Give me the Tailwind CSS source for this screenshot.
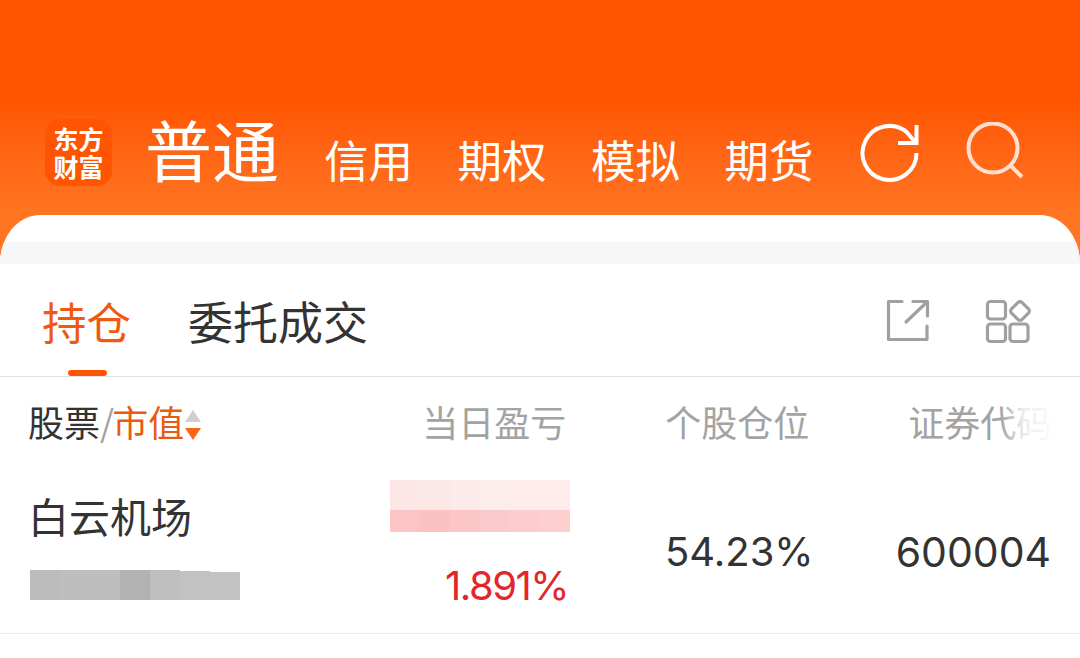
<!DOCTYPE html>
<html><head><meta charset="utf-8">
<script src="https://cdn.jsdelivr.net/npm/@tailwindcss/browser@4"></script>
</head>
<body class="m-0 bg-white overflow-hidden font-['Noto_Sans_CJK_SC','Noto_Sans',sans-serif]">
<div class="w-[1080px] h-[658px] relative overflow-hidden bg-white">
  <header class="h-[270px] bg-gradient-to-b from-[#ff5500] from-[36%] to-[#ff7522] to-[80%] flex items-start pt-[119px] pl-[45px]">
    <div class="w-[67px] h-[67px] rounded-[15px] bg-[#ff5500] flex flex-col items-center pt-[5px] text-white text-[25px] leading-[28px] font-bold">
      <span>东方</span><span>财富</span>
    </div>
    <span class="ml-[33px] text-white text-[67px] leading-[66px] -mt-[4px]">普通</span>
    <nav class="flex ml-[45px] gap-[44.5px] text-white text-[44.5px] leading-[50px] pt-[15px]">
      <span>信用</span><span>期权</span><span>模拟</span><span>期货</span>
    </nav>
    <svg class="ml-[45px] mt-[3px]" width="60" height="60" viewBox="0 0 60 60" fill="none" stroke="#fff" stroke-width="4">
      <path d="M57.5 31A27 27 0 1 1 47.9 10.3L57 21"/>
      <path d="M57.5 3V21H39"/>
    </svg>
    <svg class="ml-[47px] mt-[3px] opacity-80" width="60" height="60" viewBox="0 0 60 60" fill="none" stroke="#fff" stroke-width="4">
      <circle cx="27" cy="26" r="24.5"/>
      <path d="M44 43L56 55"/>
    </svg>
  </header>
  <main class="absolute left-0 right-0 top-[215px] bottom-0 rounded-tl-[40px_48px] rounded-tr-[40px_48px] bg-white overflow-hidden">
    <div class="h-[27px]"></div>
    <div class="h-[22px] bg-[#f6f7f9]"></div>
    <section class="h-[113px] border-b border-[#e3e3e3] flex items-start relative">
      <span class="ml-[42px] mt-[29px] text-[44.5px] leading-[56px] text-[#f05a10]">持仓</span>
      <span class="ml-[57px] mt-[29px] text-[45px] leading-[56px] text-[#333]">委托成交</span>
      <span class="absolute left-[68px] bottom-0 w-[39px] h-[6px] rounded-full bg-[#ff5500]"></span>
      <svg class="ml-auto mt-[34px]" width="46" height="46" viewBox="0 0 46 46" fill="none" stroke="#a0a0a0" stroke-width="3.2" stroke-linecap="round" stroke-linejoin="round">
        <path d="M17 3.5H3.5V41.5H42V28"/><path d="M21 24L42 4"/><path d="M28 3.5H42.5V18"/>
      </svg>
      <svg class="ml-[54px] mr-[49px] mt-[34px]" width="46" height="46" viewBox="0 0 46 46" fill="none" stroke="#a0a0a0" stroke-width="3.2" stroke-linejoin="round">
        <rect x="2.5" y="3.5" width="18" height="17.5" rx="3"/>
        <rect x="2.5" y="26" width="18" height="17.5" rx="3"/>
        <rect x="25" y="26" width="18" height="17.5" rx="3"/>
        <rect x="27.5" y="5.5" width="15" height="15" rx="3" transform="rotate(45 35 13)"/>
      </svg>
    </section>
    <section class="h-[95px] flex items-start text-[36px] leading-[48px] text-[#a3a3a3] relative pt-[20px]">
      <span class="ml-[28px] text-[#333]">股票</span><span>/</span><span class="-ml-[2px] text-[#e85c12]">市值</span>
      <svg class="mt-[12px]" width="18" height="32" viewBox="0 0 18 32"><path d="M9 1L17 13H1Z" fill="#cfcfcf"/><path d="M1 19H17L9 31Z" fill="#fb6514"/></svg>
      <span class="ml-[220px]">当日盈亏</span>
      <span class="ml-[99px]">个股仓位</span>
      <span class="ml-[99px] whitespace-nowrap">证券代码</span>
      <div class="absolute right-0 top-0 bottom-0 w-[80px] bg-gradient-to-r from-white/0 via-white/80 via-[30%] to-white/95 to-[65%]"></div>
    </section>
    <section class="h-[162px] border-b border-[#ededed] flex items-start relative">
      <div class="w-[390px] pl-[28px] pt-[19px] shrink-0">
        <div class="text-[41px] leading-[48px] text-[#333]">白云机场</div>
        <div class="flex mt-[31px] ml-[2px] h-[30px] w-[210px]">
          <div class="w-[30px] bg-[#bcbcbc]"></div><div class="w-[60px] bg-[#bebebe]"></div><div class="w-[30px] bg-[#b2b2b2]"></div><div class="w-[30px] bg-[#bfbfbf]"></div><div class="w-[30px] h-[29px] self-end bg-[#c2c2c2]"></div><div class="w-[30px] h-[28px] self-end bg-[#c2c2c2]"></div>
        </div>
      </div>
      <div class="w-[180px] shrink-0 pt-[8px] flex flex-col items-end">
        <div class="flex w-full h-[30px]">
          <div class="flex-1 bg-[#fce6e6]"></div><div class="flex-1 bg-[#fde8e8]"></div><div class="flex-1 bg-[#fdeaea]"></div><div class="flex-1 bg-[#fdecec]"></div><div class="flex-1 bg-[#feecec]"></div><div class="flex-1 bg-[#feecec]"></div>
        </div>
        <div class="flex w-full h-[22px]">
          <div class="flex-1 bg-[#fcc4c4]"></div><div class="flex-1 bg-[#fcc2c2]"></div><div class="flex-1 bg-[#fcc6c6]"></div><div class="flex-1 bg-[#fccaca]"></div><div class="flex-1 bg-[#fdcccc]"></div><div class="flex-1 bg-[#fdcfcf]"></div>
        </div>
        <div class="mt-[30px] pr-[2px] text-[40px] leading-[48px] tracking-[-1.5px] text-[#e3262b] font-['Inter',sans-serif]">1.891%</div>
      </div>
      <div class="ml-auto flex pt-[56px] text-[40px] leading-[48px] text-[#333] font-['Inter',sans-serif] pr-[29px]">
        <span>54.23%</span><span class="ml-[82px] text-[41px]">600004</span>
      </div>
    </section>
  </main>
</div>
</body></html>
